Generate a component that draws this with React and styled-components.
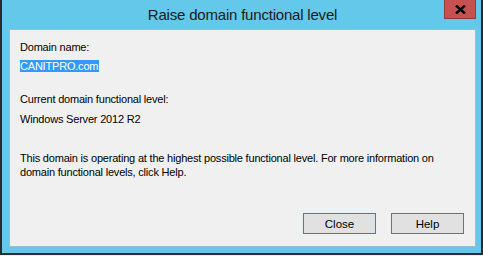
import React from "react";
import styled, { createGlobalStyle } from "styled-components";

const GlobalStyle = createGlobalStyle`
  html, body {
    margin: 0;
    padding: 0;
    background: #f0f0f0;
  }
  body {
    font-family: "Liberation Sans", Arial, sans-serif;
    color: #000;
  }
`;

function App() {
  return (
    <>
      <GlobalStyle />
      <Window>
        <TitleBar>
          <span />
          <Title>Raise domain functional level</Title>
          <CloseX aria-label="Close">
            <svg width="11" height="9" viewBox="0 0 11 9">
              <path d="M1 0.5 L10 8.5 M10 0.5 L1 8.5" stroke="#000" strokeWidth="2.4" />
            </svg>
          </CloseX>
        </TitleBar>
        <Panel>
          <Label>Domain name:</Label>
          <Value $gap={5}>
            <Selected>CANITPRO.com</Selected>
          </Value>
          <Label $gap={19}>Current domain functional level:</Label>
          <Value $gap={6}>Windows Server 2012 R2</Value>
          <Paragraph>
            This domain is operating at the highest possible functional level. For more information on
            <br />
            domain functional levels, click Help.
          </Paragraph>
          <Buttons>
            <Button $default>Close</Button>
            <Button>Help</Button>
          </Buttons>
        </Panel>
      </Window>
    </>
  );
}

const Window = styled.div`
  box-sizing: border-box;
  width: 483px;
  height: 255px;
  background: #63c8ea;
  border: 2px solid #2b2b2b;
  border-top: none;
  padding: 0 5px 6px 7px;
  display: flex;
  flex-direction: column;
`;

const TitleBar = styled.div`
  height: 29px;
  display: grid;
  grid-template-columns: 1fr auto 1fr;
  align-items: start;
`;

const Title = styled.div`
  font-size: 15px;
  line-height: 29px;
  color: #1a1a1a;
  white-space: nowrap;
  letter-spacing: -0.2px;
`;

const CloseX = styled.div`
  justify-self: end;
  box-sizing: border-box;
  width: 32px;
  height: 19px;
  background: #c75050;
  border: 1px solid #8c3a3a;
  border-top: none;
  display: flex;
  align-items: center;
  justify-content: center;
`;

const Panel = styled.div`
  flex: 1;
  box-sizing: border-box;
  background: #f0f0f0;
  border: 1px solid #9dbccd;
  padding: 10px 11px 12px 10px;
  display: flex;
  flex-direction: column;
  font-size: 11px;
  line-height: 14px;
  letter-spacing: -0.2px;
  white-space: nowrap;
`;

const Label = styled.div`
  margin-top: ${(p) => p.$gap || 0}px;
`;

const Value = styled.div`
  margin-top: ${(p) => p.$gap || 0}px;
`;

const Selected = styled.span`
  display: inline-block;
  background: #3399ff;
  color: #fff;
  line-height: 12px;
  padding: 0 1px 0 0;
`;

const Paragraph = styled.p`
  margin: 25px 0 0;
`;

const Buttons = styled.div`
  margin-top: auto;
  display: flex;
  justify-content: flex-end;
  gap: 15px;
`;

const Button = styled.button`
  box-sizing: border-box;
  width: 73px;
  height: 21px;
  padding: 0;
  font-family: "Liberation Sans", Arial, sans-serif;
  font-size: 11.5px;
  color: #000;
  background: #e1e1e1;
  border: 1px solid ${(p) => (p.$default ? "#3c7fb1" : "#707070")};
  border-radius: 0;
`;

export default App;
